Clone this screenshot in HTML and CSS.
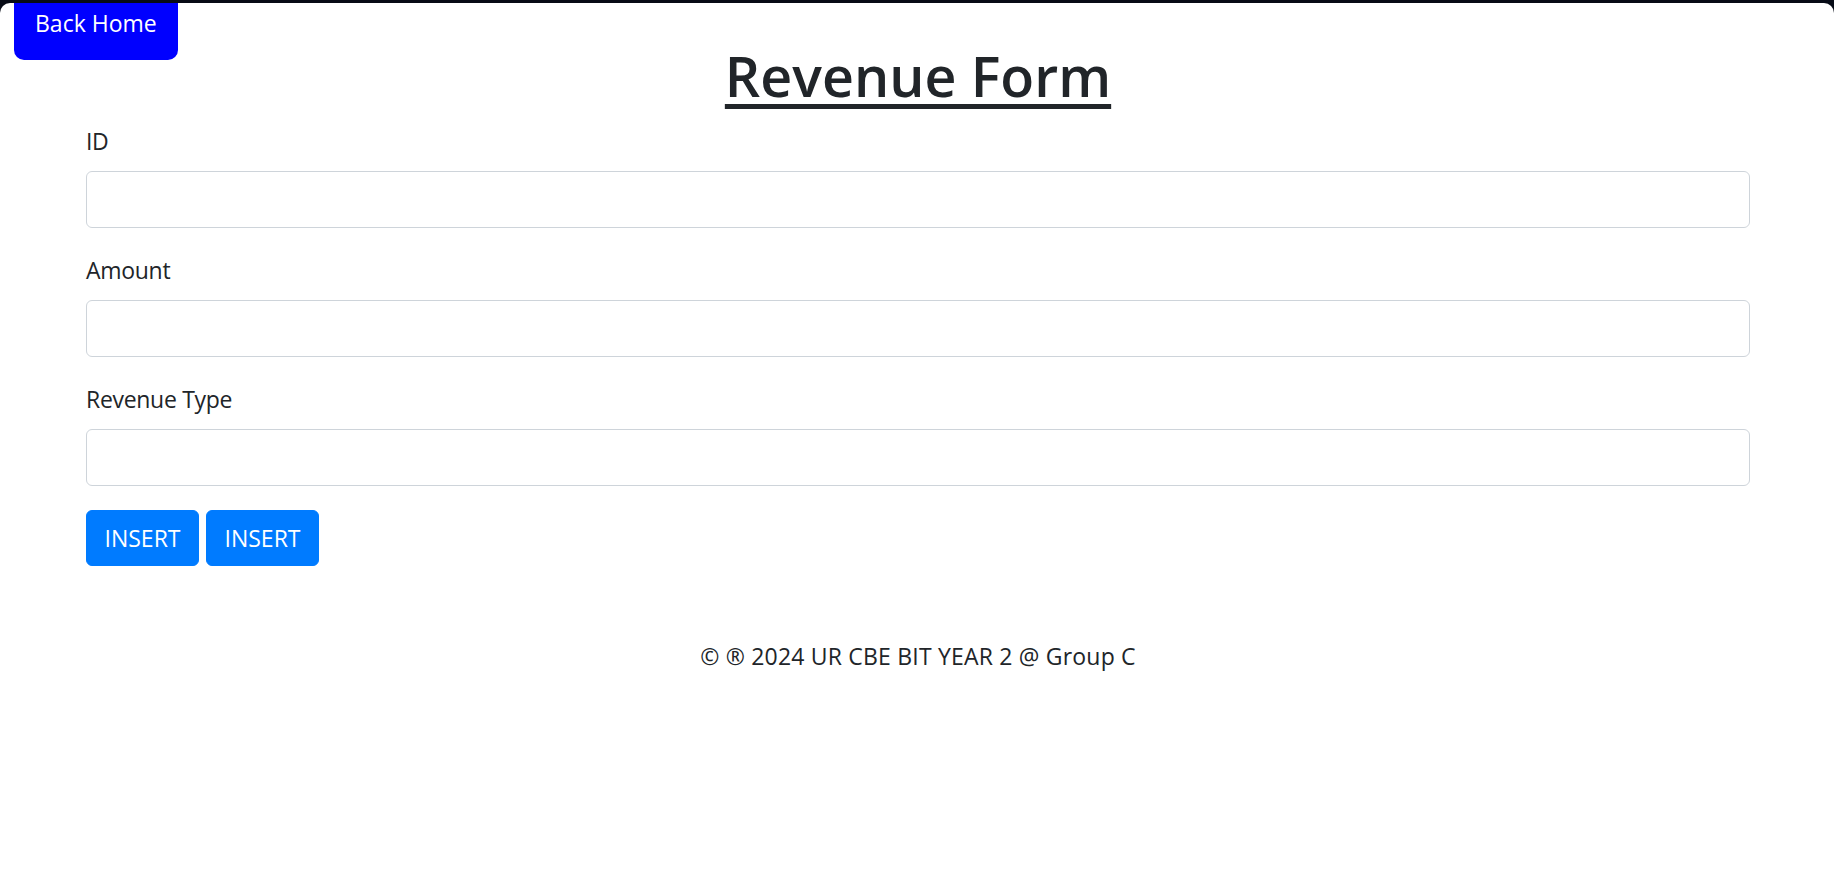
FILE: index.html
```html
<!DOCTYPE html>
<html lang="en">
<head>
<meta charset="utf-8">
<title>Revenue Form</title>
<link rel="stylesheet" href="styles.css">
</head>
<body>
<div class="window">
  <a class="back-btn" href="#">Back Home</a>
  <div class="container">
    <h1 class="title">Revenue Form</h1>
    <form class="form">
      <div class="group">
        <label class="label" for="id">ID</label>
        <input class="input" id="id" type="text">
      </div>
      <div class="group">
        <label class="label" for="amount">Amount</label>
        <input class="input" id="amount" type="text">
      </div>
      <div class="group">
        <label class="label" for="type">Revenue Type</label>
        <input class="input" id="type" type="text">
      </div>
      <div class="actions">
        <button class="btn" type="button">INSERT</button>
        <button class="btn" type="button">INSERT</button>
      </div>
    </form>
    <footer class="footer">© ® 2024 UR CBE BIT YEAR 2 @ Group C</footer>
  </div>
</div>
</body>
</html>
```
FILE: styles.css
```css
html, body {
  margin: 0;
  padding: 0;
  height: 100%;
}
body {
  background: #070b16;
  font-family: "Open Sans", "Noto Sans", sans-serif;
  color: #212529;
}
.window {
  position: relative;
  margin-top: 3px;
  height: 877px;
  background: #ffffff;
  border-radius: 10px 10px 0 0;
  overflow: hidden;
}
.back-btn {
  position: absolute;
  left: 14px;
  top: -13px;
  padding: 15px 21px 19px;
  background: #0000ff;
  color: #ffffff;
  font-size: 23px;
  line-height: 36px;
  text-decoration: none;
  border-radius: 10px;
}
.container {
  width: 1664px;
  margin: 0 0 0 86px;
  padding-top: 37px;
}
.title {
  margin: 0 0 11px;
  text-align: center;
  font-size: 55.5px;
  line-height: 72px;
  font-weight: 600;
  text-decoration: underline;
  text-decoration-thickness: 5px;
  text-underline-offset: 7px;
}
.form {
  display: flex;
  flex-direction: column;
}
.group {
  display: flex;
  flex-direction: column;
  margin-bottom: 24px;
}
.label {
  font-size: 23px;
  line-height: 36px;
  margin-bottom: 12px;
  letter-spacing: -0.3px;
}
.input {
  box-sizing: border-box;
  height: 57px;
  width: 100%;
  border: 1.5px solid #ced4da;
  border-radius: 6px;
  background: #ffffff;
  font-size: 23px;
  padding: 0 18px;
}
.actions {
  display: flex;
  gap: 7px;
}
.btn {
  height: 56px;
  padding: 0 17.5px;
  border: 1.5px solid #007bff;
  background: #007bff;
  color: #ffffff;
  border-radius: 6px;
  font-family: "Open Sans", "Noto Sans", sans-serif;
  font-size: 23px;
  line-height: 36px;
}
.footer {
  margin-top: 72px;
  text-align: center;
  font-size: 23px;
  line-height: 36px;
  letter-spacing: 0.2px;
}
```
